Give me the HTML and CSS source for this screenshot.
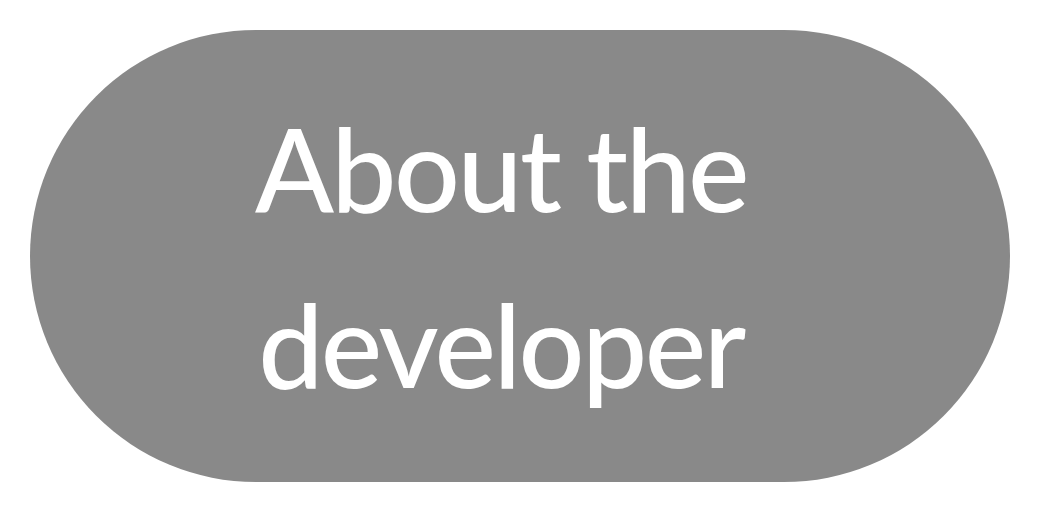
FILE: index.html
```html
<!DOCTYPE html>
<html lang="en">
<head>
<meta charset="utf-8">
<title>About the developer</title>
<link rel="stylesheet" href="styles.css">
</head>
<body>
<div class="pill">
  <span class="label">About the<br>developer</span>
</div>
</body>
</html>
```
FILE: styles.css
```css
html, body {
  margin: 0;
  padding: 0;
  background: #ffffff;
}
body {
  width: 1040px;
  height: 512px;
  padding: 30px;
  box-sizing: border-box;
}
.pill {
  height: 452px;
  border-radius: 226px;
  background: #898989;
  display: flex;
  align-items: center;
  justify-content: center;
  padding-right: 38px;
}
.label {
  font-family: "Lato", "Noto Sans", sans-serif;
  font-size: 116px;
  font-weight: 500;
  line-height: 176px;
  letter-spacing: -2.5px;
  color: #ffffff;
  text-align: center;
}
```
